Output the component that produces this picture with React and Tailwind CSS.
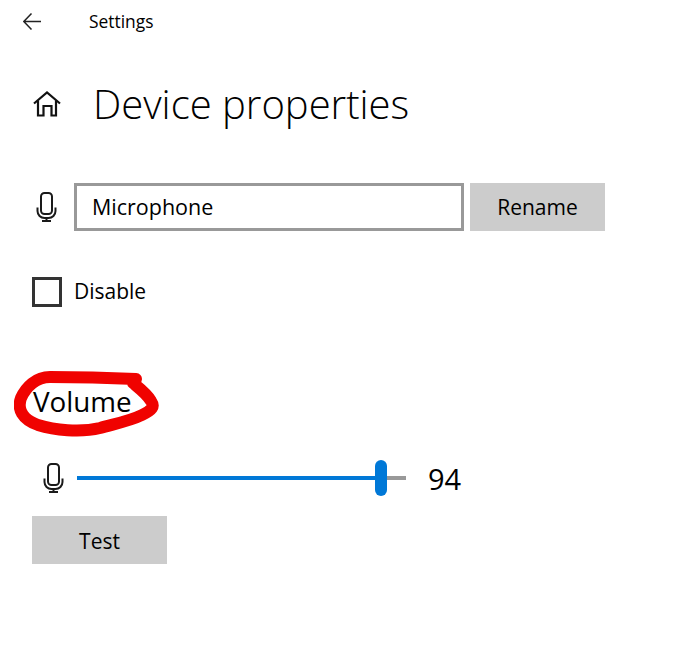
import React from "react";

const font = { fontFamily: '"Open Sans", "Noto Sans", sans-serif' };

const MicIcon = ({ className }) => (
  <svg viewBox="0 0 21 30" fill="none" stroke="#1a1a1a" strokeWidth="2" className={className}>
    <rect x="5" y="1" width="11" height="21" rx="3.5" />
    <path d="M1.5 15.5v3.5a7 7 0 0 0 7 7h4a7 7 0 0 0 7-7v-3.5" />
    <path d="M10.5 26v3M6 29h9" />
  </svg>
);

const BackIcon = () => (
  <svg viewBox="0 0 18 17" fill="none" stroke="#222" strokeWidth="1.5" className="w-[18px] h-[17px]">
    <path d="M0.8 8.5H18M8.5 0.5L0.8 8.5L8.5 16.5" />
  </svg>
);

const HomeIcon = () => (
  <svg viewBox="0 0 28 26" fill="none" stroke="#111" strokeWidth="2.2" className="w-[28px] h-[26px]">
    <path d="M1 12.5L14 1.5l13 11" />
    <path d="M5 9.5V24.5h5.5V15h8v9.5H23V9.5" />
  </svg>
);

const Scribble = () => (
  <svg viewBox="0 0 160 80" fill="none" className="absolute left-[-19px] top-[-17px] w-[160px] h-[80px] pointer-events-none">
    <path
      d="M122 16C100 15 60 14 36 14C22 14 12 24 7 35C3 46 8 56 24 62C40 67 66 70 86 65C100 61 116 58 128 52C138 47 141 44 137 38C133 31 125 25 119 20"
      stroke="#f00200"
      strokeWidth="12"
      strokeLinecap="round"
      strokeLinejoin="round"
    />
  </svg>
);

export default function App() {
  return (
    <div className="w-[673px] h-[646px] bg-white text-black overflow-hidden" style={font}>
      <div className="flex items-center h-[42px] pl-[23px]">
        <BackIcon />
        <span className="ml-[48px] text-[17.4px]">Settings</span>
      </div>

      <div className="flex items-center h-[50px] mt-[37px] pl-[33px]">
        <HomeIcon />
        <h1 className="ml-[32px] text-[40px] font-light leading-none">Device properties</h1>
      </div>

      <div className="flex items-center mt-[54px] pl-[36px]">
        <MicIcon className="w-[21px] h-[30px]" />
        <div className="ml-[17px] w-[390px] h-[48px] border-[3px] border-[#999] flex items-center pl-[15px] text-[21.5px]">
          Microphone
        </div>
        <button className="ml-[6px] w-[135px] h-[48px] pt-[2px] bg-[#ccc] text-[21px]">Rename</button>
      </div>

      <div className="flex items-center mt-[45px] pl-[32px]">
        <div className="w-[30px] h-[30px] border-[3px] border-[#333]" />
        <span className="ml-[12px] text-[21px]">Disable</span>
      </div>

      <div className="relative mt-[72px] ml-[33px] w-fit h-[44px] flex items-center text-[27.8px]">
        <span>Volume</span>
        <Scribble />
      </div>

      <div className="flex items-center mt-[36px] pl-[43px] h-[36px]">
        <MicIcon className="w-[21px] h-[30px]" />
        <div className="relative ml-[13px] w-[329px] h-[4px] bg-[#999]">
          <div className="h-full w-[304px] bg-[#0078d7]" />
          <div className="absolute left-[298px] top-[-16px] w-[12px] h-[36px] rounded-full bg-[#0078d7]" />
        </div>
        <span className="ml-[22px] pt-[2px] text-[29px]">94</span>
      </div>

      <button className="block mt-[20px] ml-[32px] w-[135px] h-[48px] pt-[4px] bg-[#ccc] text-[21px]">Test</button>
    </div>
  );
}
